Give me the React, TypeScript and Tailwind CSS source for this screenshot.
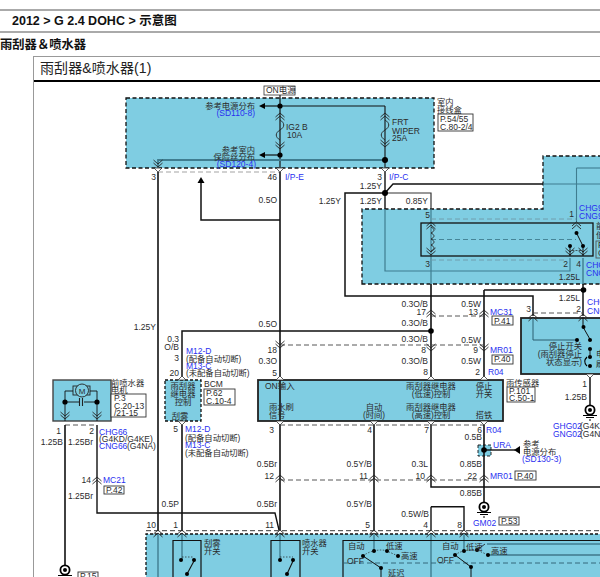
const BLUE = "#7fcde2";
const TEAL = "#3f7d90";
const CN = 8.3;

function W({ p, c = "#111", w = 1.4 }: { p: string; c?: string; w?: number }) {
    return <polyline points={p} fill="none" stroke={c} strokeWidth={w} />;
}

function D({ p, c = "#666" }: { p: string; c?: string }) {
    return <polyline points={p} fill="none" stroke={c} strokeWidth={0.9} strokeDasharray="5 3" />;
}

function T({ x, y, t, a, blue, size }: { x: number; y: number; t: string; a?: "end" | "middle"; blue?: boolean; size?: number }) {
    return (
        <text x={x} y={y} textAnchor={a} fontSize={size} fill={blue ? "#2a2ff0" : "#2b2b2b"}>
            {t}
        </text>
    );
}

function Dot({ x, y, r = 2.6 }: { x: number; y: number; r?: number }) {
    return <circle cx={x} cy={y} r={r} fill="#000" />;
}

// double chevron on a wire, up or down
function Conn({ x, y, up, c = "#222" }: { x: number; y: number; up?: boolean; c?: string }) {
    const s = up ? 1 : -1;
    return (
        <g fill="none" stroke={c} strokeWidth={0.9}>
            <path d={`M${x - 4.5} ${y + 3 * s}L${x} ${y - 1 * s}L${x + 4.5} ${y + 3 * s}`} />
            <path d={`M${x - 4.5} ${y + 6 * s}L${x} ${y + 2 * s}L${x + 4.5} ${y + 6 * s}`} />
        </g>
    );
}

// small white notch where a wire leaves a box
function Notch({ x, y, up }: { x: number; y: number; up?: boolean }) {
    const s = up ? -1 : 1;
    return <path d={`M${x - 4} ${y}L${x} ${y + 4 * s}L${x + 4} ${y}Z`} fill="#fff" stroke="#333" strokeWidth={0.8} />;
}

function Ground({ x, y }: { x: number; y: number }) {
    return (
        <g>
            <circle cx={x} cy={y} r={4.6} fill="#fff" stroke="#000" strokeWidth={1.8} />
            <circle cx={x} cy={y} r={2} fill="#000" />
            <path d={`M${x - 7} ${y + 5.5}H${x + 7}M${x - 4} ${y + 7.5}H${x + 4}M${x - 1} ${y + 10}H${x + 1}`} stroke="#000" strokeWidth={1} />
        </g>
    );
}

function PBox({ x, y, w, h }: { x: number; y: number; w: number; h: number }) {
    return <rect x={x} y={y} width={w} height={h} fill="#fff" stroke="#333" strokeWidth={0.9} />;
}

function Fuse({ x, y }: { x: number; y: number }) {
    return <path d={`M${x} ${y}c5 3 5 7 0 10c-5 3-5 7 0 10`} fill="none" stroke="#222" strokeWidth={0.9} />;
}

function Diagram() {
    return (
        <svg viewBox="33 82 567 495" width={567} height={495} className="block" fontSize={8.5}>
            {/* blue boxes */}
            <rect x="125" y="98" width="308" height="70" fill={BLUE} stroke="#111" strokeWidth="1.3" strokeDasharray="4 2.5" />
            <path d="M361 284V209H542V156H602V284Z" fill={BLUE} stroke="#111" strokeWidth="1.3" strokeDasharray="4 2.5" />
            <rect x="520" y="318" width="90" height="56" fill={BLUE} stroke="#222" strokeWidth="1.8" />
            <rect x="257" y="380" width="245" height="41" fill={BLUE} stroke="#222" strokeWidth="1.8" />
            <rect x="164" y="380" width="36" height="41" fill={BLUE} stroke="#111" strokeWidth="1.3" strokeDasharray="3 2" />
            <rect x="52" y="380" width="58" height="41" fill={BLUE} stroke="#444" strokeWidth="1.4" />
            <rect x="477" y="445" width="13" height="11" fill={BLUE} stroke="#111" strokeWidth="0.9" strokeDasharray="3 2" />
            <path d="M145 600V534H610V600Z" fill={BLUE} stroke="#111" strokeWidth="1.3" strokeDasharray="3 2" />

            {/* top fuse box */}
            <W p="279,95 279,168" w={1.2} />
            <W p="279,106 384,106" w={1.1} />
            <W p="263,106 279,106" w={1.2} />
            <W p="263,155 279,155" w={1.2} />
            <W p="384,106 384,168" w={1.1} />
            <W p="157,168 157,160 384,160" c={TEAL} w={1.8} />
            <path d="M258 106l6-3v6zM258 155l6-3v6z" fill="#000" />
            <Conn x={279} y={114} up />
            <Conn x={279} y={148} />
            <Conn x={384} y={114} up />
            <Conn x={384} y={146} />
            <Fuse x={279} y={120} />
            <Fuse x={384} y={120} />
            <Dot x={279} y={106} />
            <Dot x={279} y={155} />
            <Dot x={384} y={160} r={3} />
            <Conn x={157} y={166} />
            <Notch x={157} y={168} />
            <Notch x={279} y={168} />
            <Notch x={384} y={168} />
            <D p="157,172 279,172" c="#999" />
            <rect x="263" y="86" width="31" height="9" fill="#fff" stroke="#333" strokeWidth="0.8" />

            {/* main wires */}
            <W p="157,172 157,530" w={1.6} />
            <W p="157,534 157,600" c={TEAL} />
            <W p="279,172 279,530" w={1.6} />
            <W p="279,534 279,560" c={TEAL} />
            <W p="200,183 200,220 279,220" w={1.5} />
            <path d="M200 177l-3.5 6h7z" fill="#000" />
            <W p="384,172 384,209" w={1.4} />
            <W p="384,209 384,271 569,271 569,258" c={TEAL} w={1.2} />
            <W p="344,209 344,296 532,296 532,316" w={1.5} />
            <W p="384,193 344,193 344,209" w={1.5} />
            <W p="384,193 392,184 542,184" w={1.4} />
            <W p="542,184 600,184" c={TEAL} w={1.1} />
            <W p="384,193 430,193 430,209" w={1.2} c="#333" />
            <W p="430,209 430,284" c={TEAL} w={1.2} />
            <W p="430,284 430,378" w={1.6} />
            <W p="483,290 582,290" w={1.5} />
            <W p="483,290 483,378" w={1.6} />
            <W p="582,258 582,284" c={TEAL} w={1.4} />
            <W p="582,284 582,316" w={1.5} />
            <W p="575.5,168 600,168" c={TEAL} w={1.1} />
            <W p="575.5,168 575.5,222" c={TEAL} w={1.1} />
            <W p="181,378 181,331 430,331" w={1.5} />
            <Dot x={430} y={331} r={2.8} />
            <Dot x={582.5} y={290} r={2.8} />
            <Dot x={384} y={193} r={3} />

            {/* second box contents */}
            <rect x="420" y="223" width="172" height="33" fill="none" stroke="#111" strokeWidth="1.3" />
            <D p="430,219 575,219" c="#6f9aa8" />
            <D p="430,260 565,260" c="#6f9aa8" />
            <D p="430,239.5 575,239.5" c="#3f7d90" />
            <path d="M430 227c4 2 4 4 0 6c4 2 4 4 0 6c4 2 4 4 0 6c4 2 4 4 0 6" fill="none" stroke="#222" strokeWidth="0.9" />
            <Conn x={430} y={223} up />
            <Conn x={430} y={254} />
            <Conn x={575.5} y={223} up />
            <Conn x={569} y={254} />
            <Conn x={582} y={254} />
            <W p="575.5,233 582,246" w={1} />
            <W p="569,246 569,256" w={1} />
            <W p="582,246 582,256" w={1} />
            <path d="M571 250.5h9" stroke="#222" strokeWidth="0.7" strokeDasharray="2 1.5" />
            <Dot x={575.5} y={233} r={2} />
            <Dot x={582} y={246} r={2} />
            <Dot x={569} y={246} r={2} />

            {/* middle connectors */}
            <D p="430,316 483,316" c="#444" />
            <Conn x={430} y={311} up />
            <Conn x={483} y={311} up />
            <D p="279,345 483,345" c="#444" />
            <Conn x={279} y={347} />
            <Conn x={430} y={350} />
            <Conn x={483} y={350} />
            <D p="532,313 582,313" c="#444" />
            <Conn x={532} y={315} up />
            <Conn x={582} y={315} up />
            <Notch x={279} y={380} up />
            <Notch x={430} y={380} up />
            <Notch x={483} y={380} up />
            <Notch x={181} y={380} up />

            {/* stop switch */}
            <W p="532,318 532,340 576,340" c="#2d5f70" w={1} />
            <W p="582,318 582,327 590,341" w={1} />
            <Dot x={576} y={340} r={2} />
            <Dot x={582.5} y={327} r={2} />
            <Dot x={589} y={340} r={2} />
            <Dot x={589} y={349} r={2} />
            <Dot x={589} y={357} r={2} />
            <Dot x={589} y={366} r={2} />
            <path d="M586 357c-3 3-3 6 0 9" fill="none" stroke="#000" strokeWidth="1.2" />
            <W p="589,349 589,357" w={0.9} />
            <W p="589,375 589,405" w={1.5} />
            <Notch x={589} y={374} />
            <Ground x={589} y={410} />

            {/* lower connectors */}
            <D p="279,425 483,425" c="#444" />
            <Notch x={279} y={421} />
            <Notch x={373} y={421} />
            <Notch x={430} y={421} />
            <Notch x={483} y={421} />
            <Notch x={181} y={421} />
            <W p="373,425 373,530" w={1.6} />
            <W p="373,534 373,551" c={TEAL} />
            <W p="430,425 430,487 600,487" w={1.5} />
            <W p="430,506.7 463,506.7 463,530" w={1.4} />
            <W p="430,506.7 430,530" w={1.4} />
            <W p="430,534 430,600" c={TEAL} />
            <W p="463,534 463,551" c={TEAL} />
            <W p="483,425 483,502" w={1.6} />
            <W p="483,450 514,450" w={1.4} />
            <path d="M513 450l6-4v8z" fill="#000" />
            <Dot x={483} y={450} r={2.8} />
            <D p="279,480 483,480" c="#444" />
            <Conn x={279} y={476} up />
            <Conn x={373} y={476} up />
            <Conn x={430} y={476} up />
            <Conn x={483} y={476} up />
            <Ground x={483} y={507} />

            {/* motor */}
            <rect x="72" y="386" width="17" height="9" fill="none" stroke="#222" strokeWidth="0.9" />
            <circle cx="81" cy="390.5" r="6.5" fill={BLUE} stroke="#222" strokeWidth="0.9" />
            <W p="64,421 64,391 72,391" w={0.9} />
            <W p="96,421 96,391 89,391" w={0.9} />
            <W p="64,402 78,402" w={0.9} />
            <W p="83,402 96,402" w={0.9} />
            <path d="M78.5 398v8M81.5 398v8" stroke="#222" strokeWidth="1.1" />
            <Dot x={64} y={402} />
            <Dot x={96} y={402} />
            <Conn x={64} y={418} />
            <Conn x={96} y={418} />
            <D p="64,425 96,425" c="#444" />
            <W p="64,425 64,565" w={1.6} />
            <W p="96,425 96,513 274,513 278,530" w={1.4} />
            <Conn x={96} y={478} up />
            <Ground x={64} y={570} />

            {/* top of the bottom box */}
            <W p="181,425 181,530" w={1.6} />
            <W p="181,534 181,560" c={TEAL} />
            <D p="145,530.7 600,530.7" c="#222" />
            <Conn x={157} y={531} up />
            <Conn x={181} y={531} up />
            <Conn x={279} y={531} up />
            <Conn x={373} y={531} up />
            <Conn x={430} y={531} up />
            <Conn x={463} y={531} up />

            {/* bottom switches */}
            <path d="M172 580V540.5H200V580M270 580V540.5H299V580M342 580V540.5H602" fill="none" stroke="#111" strokeWidth="1.2" />
            <W p="193,561 186,574" w={1.1} />
            <W p="292,561 286,574" w={1.1} />
            <path d="M181 557h12M279 557h13" stroke="#222" strokeWidth="0.7" strokeDasharray="1.5 1.5" />
            <Dot x={180} y={560} r={2} />
            <Dot x={193} y={560} r={2} />
            <Dot x={186} y={574} r={2} />
            <Dot x={279} y={560} r={2} />
            <Dot x={292} y={560} r={2} />
            <Dot x={286} y={574} r={2} />
            <D p="342,563 600,563" c="#2d5f70" />
            <W p="362,556 380,568" w={1} />
            <W p="454,555 470,567 470,580" w={1} />
            <path d="M362 556q5-4 11-5q7-2 13 0l11 5M454 555q4-3 9-4q6-2 13-1l11 5" fill="none" stroke="#222" strokeWidth="0.7" strokeDasharray="1.5 1.5" />
            <W p="476,550 484,544" w={0.8} />
            <W p="486,544 600,544" c={TEAL} w={1.6} />
            <W p="487,555 600,555" c="#214f60" w={1.1} />
            <W p="380,568 380,580" w={1} />
            <Dot x={373} y={551} r={2} />
            <Dot x={362} y={556} r={2} />
            <Dot x={386} y={551} r={2} />
            <Dot x={397} y={556} r={2} />
            <Dot x={380} y={568} r={2} />
            <Dot x={463} y={551} r={2} />
            <Dot x={454} y={555} r={2} />
            <Dot x={476} y={550} r={2} />
            <Dot x={487} y={555} r={2} />
            <Dot x={470} y={567} r={2} />

            {/* page boxes */}
            <PBox x={437} y={114} w={35} h={17} />
            <PBox x={491} y={316} w={21} h={9} />
            <PBox x={491} y={355} w={21} h={9} />
            <PBox x={506} y={387} w={28} h={15} />
            <PBox x={110} y={394} w={35} h={23} />
            <PBox x={203} y={389} w={31} h={16} />
            <PBox x={103} y={486} w={20} h={8} />
            <PBox x={514} y={471} w={21} h={9} />
            <PBox x={498} y={517} w={20} h={8} />
            <PBox x={77} y={572} w={20} h={8} />
            <rect x="595" y="241" width="10" height="17" fill="none" stroke="#555" strokeWidth="0.9" />

            {/* top box labels */}
            <T x={265} y={93} t="ON电源" />
            <T x={254} y={109} t="参考电源分布" a="end" size={CN} />
            <T x={254} y={116} t="(SD110-8)" a="end" blue />
            <T x={254} y={153} t="参考室内" a="end" size={CN} />
            <T x={254} y={160} t="保险丝分布" a="end" size={CN} />
            <T x={255} y={167} t="(SD120-4)" a="end" blue />
            <T x={285} y={130} t="IG2 B" />
            <T x={286} y={138} t="10A" />
            <T x={391} y={125} t="FRT" />
            <T x={391} y={134} t="WIPER" />
            <T x={391} y={141} t="25A" />
            <T x={436} y={105} t="室内" size={CN} />
            <T x={436} y={113} t="接线盒" size={CN} />
            <T x={439} y={122} t="P.54/55" />
            <T x={439} y={130} t="C.80-2/4" />
            <T x={155} y={180} t="3" a="end" />
            <T x={276} y={180} t="46" a="end" />
            <T x={284} y={180} t="I/P-E" blue />
            <T x={276} y={203} t="0.5O" a="end" />
            <T x={381} y={180} t="3" a="end" />
            <T x={388} y={180} t="I/P-C" blue />
            <T x={381} y={189} t="1.25Y" a="end" />
            <T x={340} y={204} t="1.25Y" a="end" />
            <T x={381} y={204} t="1.25Y" a="end" />
            <T x={427} y={204} t="0.85Y" a="end" />

            {/* second box labels */}
            <T x={429} y={218} t="5" a="end" />
            <T x={429} y={267} t="3" a="end" />
            <T x={573} y={217} t="1" a="end" />
            <T x={567} y={267} t="2" a="end" />
            <T x={580} y={267} t="4" a="end" />
            <T x={578} y={211} t="CHG9" blue />
            <T x={578} y={219} t="CNG9" blue />
            <T x={585} y={268} t="CHG0" blue />
            <T x={585} y={276} t="CNG0" blue />
            <T x={595} y={229} t="前" size={CN} />
            <T x={595} y={238} t="低" size={CN} />
            <T x={597} y={248} t="P" />
            <T x={597} y={256} t="C" />
            <T x={579} y={280} t="1.25L" a="end" />
            <T x={579} y={301} t="1.25L" a="end" />
            <T x={586} y={305} t="CHG0" blue />
            <T x={586} y={314} t="CNG0" blue />
            <T x={530} y={312} t="3" a="end" />
            <T x={580} y={312} t="2" a="end" />
            <T x={155} y={330} t="1.25Y" a="end" />

            {/* middle labels */}
            <T x={427} y={307} t="0.3O/B" a="end" />
            <T x={425} y={315} t="17" a="end" />
            <T x={480} y={307} t="0.5W" a="end" />
            <T x={477} y={315} t="13" a="end" />
            <T x={489} y={315} t="MC31" blue />
            <T x={493} y={324} t="P.41" />
            <T x={427} y={326} t="0.3O/B" a="end" />
            <T x={276} y={327} t="0.5O" a="end" />
            <T x={427} y={342} t="0.3O/B" a="end" />
            <T x={480} y={343} t="0.5W" a="end" />
            <T x={425} y={353} t="8" a="end" />
            <T x={477} y={353} t="9" a="end" />
            <T x={489} y={353} t="MR01" blue />
            <T x={493} y={362} t="P.40" />
            <T x={427} y={364} t="0.3O/B" a="end" />
            <T x={480} y={364} t="0.5W" a="end" />
            <T x={427} y={375} t="8" a="end" />
            <T x={479} y={375} t="2" a="end" />
            <T x={487} y={375} t="R04" blue />
            <T x={276} y={353} t="18" a="end" />
            <T x={276} y={364} t="0.3O" a="end" />
            <T x={276} y={376} t="5" a="end" />
            <T x={178} y={342} t="0.3" a="end" />
            <T x={178} y={350} t="O/B" a="end" />
            <T x={178} y={361} t="3" a="end" />
            <T x={178} y={376} t="20" a="end" />
            <T x={185} y={354} t="M12-D" blue />
            <T x={185} y={362} t="(配备自动切断)" size={CN} />
            <T x={185} y={369} t="M13-C" blue />
            <T x={185} y={376} t="(未配备自动切断)" size={CN} />

            {/* stop switch labels */}
            <T x={581} y={349} t="停止开关" a="end" size={CN} />
            <T x={581} y={357} t="(雨刮器停止" a="end" size={CN} />
            <T x={581} y={365} t="状态显示)" a="end" size={CN} />
            <T x={595} y={357} t="电" size={CN} />
            <T x={595} y={367} t="刷" size={CN} />
            <T x={586} y={387} t="1" a="end" />
            <T x={586} y={400} t="1.25B" a="end" />
            <T x={552} y={429} t="GHG02" blue />
            <T x={579} y={429} t="(G4K" />
            <T x={552} y={437} t="GNG02" blue />
            <T x={579} y={437} t="(G4N" />
            <T x={505} y={386} t="雨传感器" size={CN} />
            <T x={508} y={394} t="P.101" />
            <T x={508} y={401} t="C.50-1" />

            {/* relay box text */}
            <T x={264} y={389} t="ON输入" />
            <T x={430} y={389} t="雨刮器继电器" a="middle" size={CN} />
            <T x={430} y={397} t="(低速)控制" a="middle" size={CN} />
            <T x={483} y={389} t="停止" a="middle" size={CN} />
            <T x={483} y={397} t="开关" a="middle" size={CN} />
            <T x={268} y={410} t="雨水刷" size={CN} />
            <T x={268} y={418} t="信号" size={CN} />
            <T x={373} y={410} t="自动" a="middle" size={CN} />
            <T x={373} y={418} t="(时间)" a="middle" size={CN} />
            <T x={430} y={410} t="雨刮器继电器" a="middle" size={CN} />
            <T x={430} y={418} t="(高速)控制" a="middle" size={CN} />
            <T x={483} y={418} t="搭铁" a="middle" size={CN} />

            {/* bcm */}
            <T x={182} y={389} t="雨刮器" a="middle" size={CN} />
            <T x={182} y={397} t="继电器" a="middle" size={CN} />
            <T x={182} y={405} t="控制" a="middle" size={CN} />
            <T x={179} y={419} t="刮雾" a="middle" size={CN} />
            <T x={203} y={387} t="BCM" />
            <T x={205} y={396} t="P.62" />
            <T x={205} y={404} t="C.10-4" />
            <T x={177} y={432} t="5" a="end" />
            <T x={184} y={432} t="M12-D" blue />
            <T x={184} y={441} t="(配备自动切断)" size={CN} />
            <T x={184} y={448} t="M13-C" blue />
            <T x={184} y={456} t="(未配备自动切断)" size={CN} />

            {/* motor labels */}
            <T x={81} y={393.5} t="M" a="middle" size={8} />
            <T x={110} y={386} t="前喷水器" size={CN} />
            <T x={110} y={393} t="电机" size={CN} />
            <T x={113} y={401} t="P.3" />
            <T x={113} y={409} t="C.20-13" />
            <T x={113} y={416} t="/21-15" />
            <T x={60} y={434} t="1" a="end" />
            <T x={93} y={434} t="2" a="end" />
            <T x={62} y={445} t="1.25B" a="end" />
            <T x={92} y={445} t="1.25Br" a="end" />
            <T x={98} y={435} t="CHG66" blue />
            <T x={98} y={442} t="(G4KD/G4KE)" />
            <T x={98} y={449} t="CNG66" blue />
            <T x={126} y={449} t="(G4NA)" />
            <T x={90} y={483} t="14" a="end" />
            <T x={102} y={483} t="MC21" blue />
            <T x={105} y={493} t="P.42" />
            <T x={92} y={499} t="1.25Br" a="end" />
            <T x={79} y={579} t="P.15" />

            {/* lower labels */}
            <T x={273} y={433} t="3" a="end" />
            <T x={371} y={433} t="4" a="end" />
            <T x={428} y={433} t="7" a="end" />
            <T x={481} y={433} t="6" a="end" />
            <T x={485} y={433} t="R04" blue />
            <T x={481} y={440} t="0.5B" a="end" />
            <T x={492} y={448} t="URA" blue />
            <T x={522} y={447} t="参考" size={CN} />
            <T x={522} y={455} t="电源分布" size={CN} />
            <T x={521} y={462} t="(SD130-3)" blue />
            <T x={276} y={467} t="0.5Br" a="end" />
            <T x={371} y={467} t="0.5Y/B" a="end" />
            <T x={427} y={467} t="0.3L" a="end" />
            <T x={481} y={467} t="0.85B" a="end" />
            <T x={273} y={479} t="12" a="end" />
            <T x={367} y={479} t="11" a="end" />
            <T x={424} y={479} t="10" a="end" />
            <T x={476} y={479} t="22" a="end" />
            <T x={489} y={479} t="MR01" blue />
            <T x={516} y={479} t="P.40" />
            <T x={481} y={496} t="0.85B" a="end" />
            <T x={371} y={507} t="0.5Y/B" a="end" />
            <T x={178} y={507} t="0.5P" a="end" />
            <T x={276} y={507} t="0.5Br" a="end" />
            <T x={428} y={517} t="0.5W/B" a="end" />
            <T x={472} y={526} t="GM02" blue />
            <T x={500} y={524} t="P.53" />
            <T x={155} y={528} t="10" a="end" />
            <T x={177} y={528} t="1" a="end" />
            <T x={273} y={528} t="11" a="end" />
            <T x={369} y={528} t="5" a="end" />
            <T x={427} y={528} t="4" a="end" />
            <T x={461} y={528} t="8" a="end" />

            {/* bottom box labels */}
            <T x={203} y={546} t="刮雾" size={CN} />
            <T x={203} y={554} t="开关" size={CN} />
            <T x={301} y={546} t="喷水器" size={CN} />
            <T x={301} y={554} t="开关" size={CN} />
            <T x={347} y={549} t="自动" size={CN} />
            <T x={385} y={549} t="低速" size={CN} />
            <T x={400} y={559} t="高速" size={CN} />
            <T x={346} y={564} t="OFF" />
            <T x={387} y={576} t="延迟" size={CN} />
            <T x={441} y={549} t="自动" size={CN} />
            <T x={465} y={550} t="低速" size={CN} />
            <T x={490} y={554} t="高速" size={CN} />
            <T x={436} y={563} t="OFF" />
        </svg>
    );
}

function App() {
    return (
        <div className="h-[577px] w-[600px] overflow-hidden bg-white font-['Liberation_Sans','Noto_Sans_CJK_SC',sans-serif] text-[#111]">
            <div className="h-[9px]" />
            <div className="flex h-[24px] items-center border-y-2 border-[#aaaaaa] pl-3 text-[12.5px] font-semibold">
                2012 &gt; G 2.4 DOHC &gt; 示意图
            </div>
            <div className="mt-[5px] h-[15px] text-[12.3px] font-bold leading-[15px]">雨刮器＆喷水器</div>
            <div className="ml-[33px] mt-[3px] border-l border-t border-[#999999]">
                <div className="h-[25px] border-b-2 border-black pl-[6px] text-[14px] leading-[23px] tracking-[0.1px] text-[#222]">
                    雨刮器&喷水器(1)
                </div>
                <Diagram />
            </div>
        </div>
    );
}

export default App;
